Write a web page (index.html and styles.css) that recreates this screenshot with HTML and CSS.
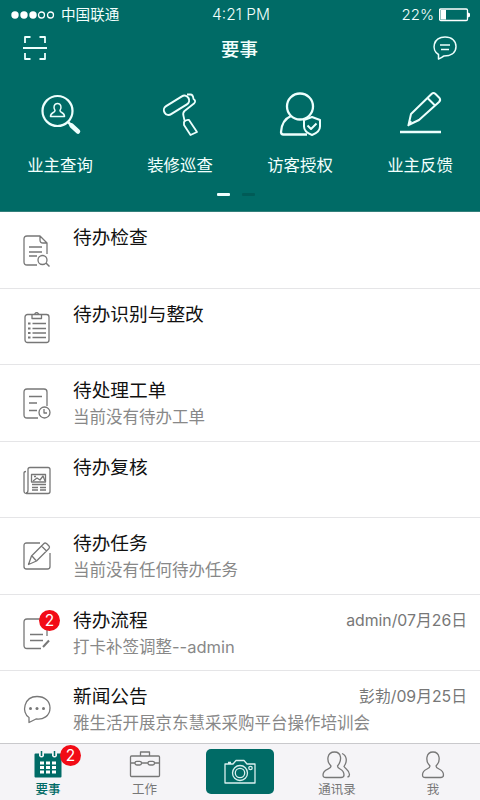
FILE: index.html
```html
<!DOCTYPE html>
<html lang="zh-CN">
<head>
<meta charset="utf-8">
<title>要事</title>
<link rel="stylesheet" href="styles.css">
</head>
<body>
<div class="app">
  <header class="hero">
    <div class="status">
      <div class="carrier">
        <svg class="signal" width="44" height="8" viewBox="0 0 44 8"><g fill="#fff"><circle cx="4" cy="4" r="3.7"/><circle cx="13" cy="4" r="3.7"/><circle cx="22" cy="4" r="3.7"/></g><g fill="none" stroke="#fff"><circle cx="30.500" cy="4" r="3"/><circle cx="39.500" cy="4" r="3"/></g></svg>
        <span>中国联通</span>
      </div>
      <span class="time">4:21 PM</span>
      <div class="power"><span>22%</span><svg width="32" height="14" viewBox="0 0 32 14"><rect x=".5" y="1" width="28" height="11.500" rx="1.300" fill="none" stroke="#fff"/><path d="M1.500 2h5.500v9.500H1.500zM29 4.500l2 1v3l-2 1z" fill="#fff"/></svg></div>
    </div>
    <div class="nav">
      <svg class="line-icon" width="24" height="24" viewBox="0 0 24 24"><path d="M2 7V1h5.500M16.500 1H22v6M2 17v6h5.500M16.500 23H22v-6M0 12h24" stroke-width="1.800"/></svg>
      <h1>要事</h1>
      <svg class="line-icon" width="26" height="24" viewBox="0 0 26 24"><path d="M6.500 23v-4.500C-1 14 1 1 13 1c7 0 11 4 11 9.500 0 7-6 9.500-12 9.500-2 1-3.500 2.300-5.500 3zM8 9h10M9 13.500h8" stroke-width="1.500"/></svg>
    </div>
    <div class="shortcuts">
      <div class="shortcut"><svg class="line-icon" width="48" height="48" viewBox="0 0 48 48"><circle cx="21.500" cy="21" r="15" stroke-width="2.200"/><path d="M35.500 35.500l6.500 6" stroke-width="4.500" stroke-linecap="round"/><path d="M32 32l4 4" stroke-width="2.500"/><path d="M19 20.500c-2-3-1-7 2.500-7s4.500 4 2.500 7c0 2.500 4.500 1.500 4.500 6h-14c0-4.500 4.500-3.500 4.500-6z" stroke-width="1.500"/></svg><span>业主查询</span></div>
      <div class="shortcut"><svg class="line-icon" width="48" height="48" viewBox="0 0 48 48"><rect x="6.500" y="10.500" width="28" height="9.500" rx="4.700" transform="rotate(-32 20.500 15.250)"/><path d="M31 4.500h3.500q2.500 0 3 4.500 3 2 .5 4.500L28.500 21q-2 2-1 5l1 4.500M28 32q1.500-2.500 5-2l8 12-6.500 3-6.500-10z" stroke-width="1.800"/></svg><span>装修巡查</span></div>
      <div class="shortcut"><svg class="line-icon" width="48" height="48" viewBox="0 0 48 48"><circle cx="24" cy="16.500" r="13" stroke-width="2.300"/><path d="M15 26c-7 3-9.500 8-10 16q0 2.500 2.500 2.500H31" stroke-width="2.300"/><path d="M36 27l8 3v6.500c0 4.500-4 7-8 8.500-4-1.500-8-4-8-8.500V30z" fill="#006b66"/><path d="M31.500 35.500l3.500 3.500 5.500-5.500"/></svg><span>访客授权</span></div>
      <div class="shortcut"><svg class="line-icon" width="48" height="48" viewBox="0 0 48 48"><path d="M12.500 35l2.500-11L35.500 4q2-2 4 0l4 4q1.500 2-.5 4L23 30zM31.500 8l7.500 7.500M12 36l3-5"/><path d="M4 42h41" stroke-width="2.400"/></svg><span>业主反馈</span></div>
    </div>
    <div class="pager"><i class="current"></i><i></i></div>
  </header>

  <main class="list">
    <section class="row"><div class="pic"><svg width="28" height="32" viewBox="0 0 28 32"><path d="M14 30H4q-3 0-3-3V4q0-3 3-3h13l7 7v11M17 1v4q0 3 3 3h4M6 12h13M6 17h13M6 21h8"/><circle cx="19.500" cy="25" r="4.500"/><path d="M23 28l3.500 3.500" stroke-width="1.500"/></svg></div><div class="copy"><h2>待办检查</h2></div></section>
    <section class="row"><div class="pic"><svg width="28" height="32" viewBox="0 0 28 32"><rect x="2" y="2.500" width="24" height="28" rx="2.500"/><path d="M9 2.500v4h9.500v-4M11.500 2.500q2-4 4.500 0M9.500 11.500H23M9.500 16.500H23M9.500 21h13.500M9.500 25.500H23"/><path d="M5 11.500h2.500M5 16.500h2.500M5 21h2.500M5 25.500h2.500" stroke-width="2.200"/></svg></div><div class="copy"><h2>待办识别与整改</h2></div></section>
    <section class="row"><div class="pic"><svg width="28" height="32" viewBox="0 0 28 32"><path d="M15 30H4q-3 0-3-3V4q0-3 3-3h17q3 0 3 3v14M6 8.500h13M6 15h8M6 22.500h8"/><circle cx="21.500" cy="24.500" r="5.500"/><path d="M21 21v4h3"/></svg></div><div class="copy"><h2>待处理工单</h2><p>当前没有待办工单</p></div></section>
    <section class="row"><div class="pic"><svg width="28" height="32" viewBox="0 0 28 32"><path d="M5 25V4.500Q5 2.500 7 2.500h18q2 0 2 2v22q0 2-2 2H3.500Q1 28.500 1 26V8q0-1.500 2-1.500M5 25q0 3-2 3M9 19.500h14M9 22.500h6M17 22.500h6M9 25h6M17 25h6"/><rect x="8.500" y="9.500" width="14" height="7.500"/><path d="M10 16l4-3 3 2 3-4 2 5M11 11.500h2"/></svg></div><div class="copy"><h2>待办复核</h2></div></section>
    <section class="row"><div class="pic"><svg width="28" height="32" viewBox="0 0 28 32"><path d="M17 2H3.500Q1 2 1 4.500v21Q1 28 3.500 28h21q2.500 0 2.500-2.500V12M5.500 23.500l3-8.500L21 2.500q1-1 2.500 0L26 5q1 1 0 2.500L13.500 20zM9 15l4 4.500M18.500 5l5 5"/></svg></div><div class="copy"><h2>待办任务</h2><p>当前没有任何待办任务</p></div></section>
    <section class="row"><div class="pic"><svg width="28" height="32" viewBox="0 0 28 32"><path d="M18 30.500H4q-3 0-3-3V4q0-3 3-3h17q3 0 3 3v14M7 16.500h13M7 22.500h13"/><path d="M20 29l6-6.500" stroke-width="2"/></svg><b class="badge">2</b></div><div class="copy"><div class="heading"><h2>待办流程</h2><time>admin/07月26日</time></div><p>打卡补签调整--admin</p></div></section>
    <section class="row"><div class="pic"><svg width="28" height="32" viewBox="0 0 28 32"><path d="M6 28.500v-5C-2 18.500 1 2.500 14 2.500c8 0 13 5 13 11.500 0 8-7 12-14 11-2 1-4 2-7 3.500z"/><g fill="#777" stroke="none"><circle cx="7.500" cy="14.500" r="1.500"/><circle cx="14" cy="14.500" r="1.500"/><circle cx="20.500" cy="14.500" r="1.500"/></g></svg></div><div class="copy"><div class="heading"><h2>新闻公告</h2><time>彭勃/09月25日</time></div><p>雅生活开展京东慧采采购平台操作培训会</p></div></section>
  </main>

  <footer class="tabs">
    <div class="tab active"><div class="tab-icon"><svg width="28" height="27" viewBox="0 0 28 27"><path d="M1.500 2.500H5V5q2.500 3 5 0V2.500h8V5q2.500 3 5 0V2.500h3.500q1 0 1 1v22q0 1-1 1h-25q-1 0-1-1v-22q0-1 1-1z" fill="#006b66" stroke="none"/><path d="M7.500 0v5M20.500 0v5" stroke="#006b66" stroke-width="1.500"/><path d="M6 12h4M12 12h4M18 12h4M6 16.500h4M12 16.500h4M18 16.500h4M6 21h4M12 21h4M18 21h4" stroke="#fff" stroke-width="3"/></svg><b class="badge">2</b></div><span>要事</span></div>
    <div class="tab"><div class="tab-icon"><svg width="32" height="27" viewBox="0 0 32 27"><rect x="1.500" y="5" width="29" height="20.500" rx="1"/><path d="M11.500 5V1h9v4M1.500 12H6M12 12h7M25 12h5.500"/><rect x="6" y="10.300" width="6.500" height="3.700" rx="1.800"/><rect x="19" y="10.300" width="6.500" height="3.700" rx="1.800"/></svg></div><span>工作</span></div>
    <div class="tab"><div class="camera"><svg width="32" height="26" viewBox="0 0 32 26"><path d="M3 5h6l3-3.500h8L23 5h8v19H1V5zM4 3.500h3"/><circle cx="16" cy="14" r="7.500"/><circle cx="16" cy="14" r="4.700"/><circle cx="26.500" cy="9" r="1.700"/></svg></div></div>
    <div class="tab"><div class="tab-icon"><svg width="30" height="28" viewBox="0 0 30 28"><path d="M9 15C4 10 5 1 12.500 1S20 10 15.500 15c0 4 6.500 2 6.500 9 0 2-1 2.500-3 2.500H4c-2 0-3-.5-3-2.500 0-7 8-5 8-9zM20 2.500c5 2 5.500 8 2 13 2 3 5 3 5.500 8q0 2-2 2.500"/></svg></div><span>通讯录</span></div>
    <div class="tab"><div class="tab-icon"><svg width="24" height="28" viewBox="0 0 24 28"><path d="M9 15C4 10 5 1 12 1s8 9 3 14c0 4 7.500 2 7.500 9 0 2-1 2.500-3 2.500h-15c-2 0-3-.5-3-2.500 0-7 7.500-5 7.500-9z"/></svg></div><span>我</span></div>
  </footer>
</div>
</body>
</html>
```

FILE: styles.css
```css
* { box-sizing: border-box; }
body { margin: 0; background: #fff; font-family: Inter, "Noto Sans CJK SC", sans-serif; }
h1, h2, p { margin: 0; font-weight: 400; }
svg { display: block; fill: none; stroke: #777; stroke-width: 1.3; stroke-linecap: butt; stroke-linejoin: round; }
.app { width: 480px; height: 800px; overflow: hidden; display: flex; flex-direction: column; }
.hero { height: 212px; flex: none; background: #006b66; color: #f2fffd; border-bottom: 1px solid #337f7b; }
.status { height: 30px; display: grid; grid-template-columns: 1fr auto 1fr; align-items: center; padding: 0 9px 0 11px; font-size: 15.5px; line-height: 30px; font-weight: 300; }
.carrier, .power { display: flex; align-items: center; }
.carrier { gap: 6px; font-size: 14.6px; font-weight: 400; }
.signal, .power svg { stroke: none; }
.power { justify-content: flex-end; gap: 5px; font-size: 15px; }
.nav { height: 36px; display: flex; align-items: center; justify-content: space-between; padding: 0 22px 0 23px; }
.nav h1 { font-size: 18.4px; line-height: 36px; padding-top: 1px; font-weight: 500; }
.line-icon { stroke: #edfffd; stroke-width: 2; }
.shortcuts { display: grid; grid-template-columns: repeat(4, 1fr); padding-top: 24px; }
.shortcut { display: flex; flex-direction: column; align-items: center; font-size: 16.4px; line-height: 24px; }
.shortcut span { margin-top: 15px; }
.pager { display: flex; justify-content: center; gap: 12px; margin-top: 16px; padding-right: 8px; }
.pager i { width: 13px; height: 3px; border-radius: 1px; background: #005b57; }
.pager .current { background: #efffff; }
.list { flex: 1; min-height: 0; overflow: hidden; }
.row { height: 76.5px; display: flex; border-bottom: 1px solid #e5e5e7; }
.pic { position: relative; width: 73px; padding: 23px 0 0 23px; flex: none; }
.copy { flex: 1; padding: 12px 13px 0 0; white-space: nowrap; }
.heading { display: flex; justify-content: space-between; }
.row h2 { font-size: 18.7px; line-height: 28px; color: #111; }
.row time { font-size: 15.8px; line-height: 28px; color: #777; }
.row p { font-size: 16.5px; line-height: 24px; color: #888; }
.badge { position: absolute; left: 39px; top: 15px; width: 21px; height: 21px; border-radius: 50%; background: #f20b16; color: #fff; font-size: 15.5px; line-height: 21px; font-weight: 400; text-align: center; }
.tabs { height: 57px; flex: none; display: grid; grid-template-columns: repeat(5, 1fr); background: #f5f4f7; border-top: 1px solid #c9c9cc; }
.tab { display: flex; flex-direction: column; align-items: center; color: #777; font-size: 12.5px; line-height: 18px; }
.tab:nth-child(n+4) { padding-left: 2px; }
.tab:nth-child(2) { padding-left: 1px; }
.tab-icon { position: relative; height: 28px; margin: 7px 0 2px; }
.tab-icon .badge { left: 26px; top: -6px; }
.active { color: #006b66; font-weight: 500; }
.camera { width: 68px; height: 45px; margin-top: 5px; display: flex; align-items: center; justify-content: center; background: #006b66; border-radius: 5px; }
.camera svg { stroke: #d9f0ef; }
```
